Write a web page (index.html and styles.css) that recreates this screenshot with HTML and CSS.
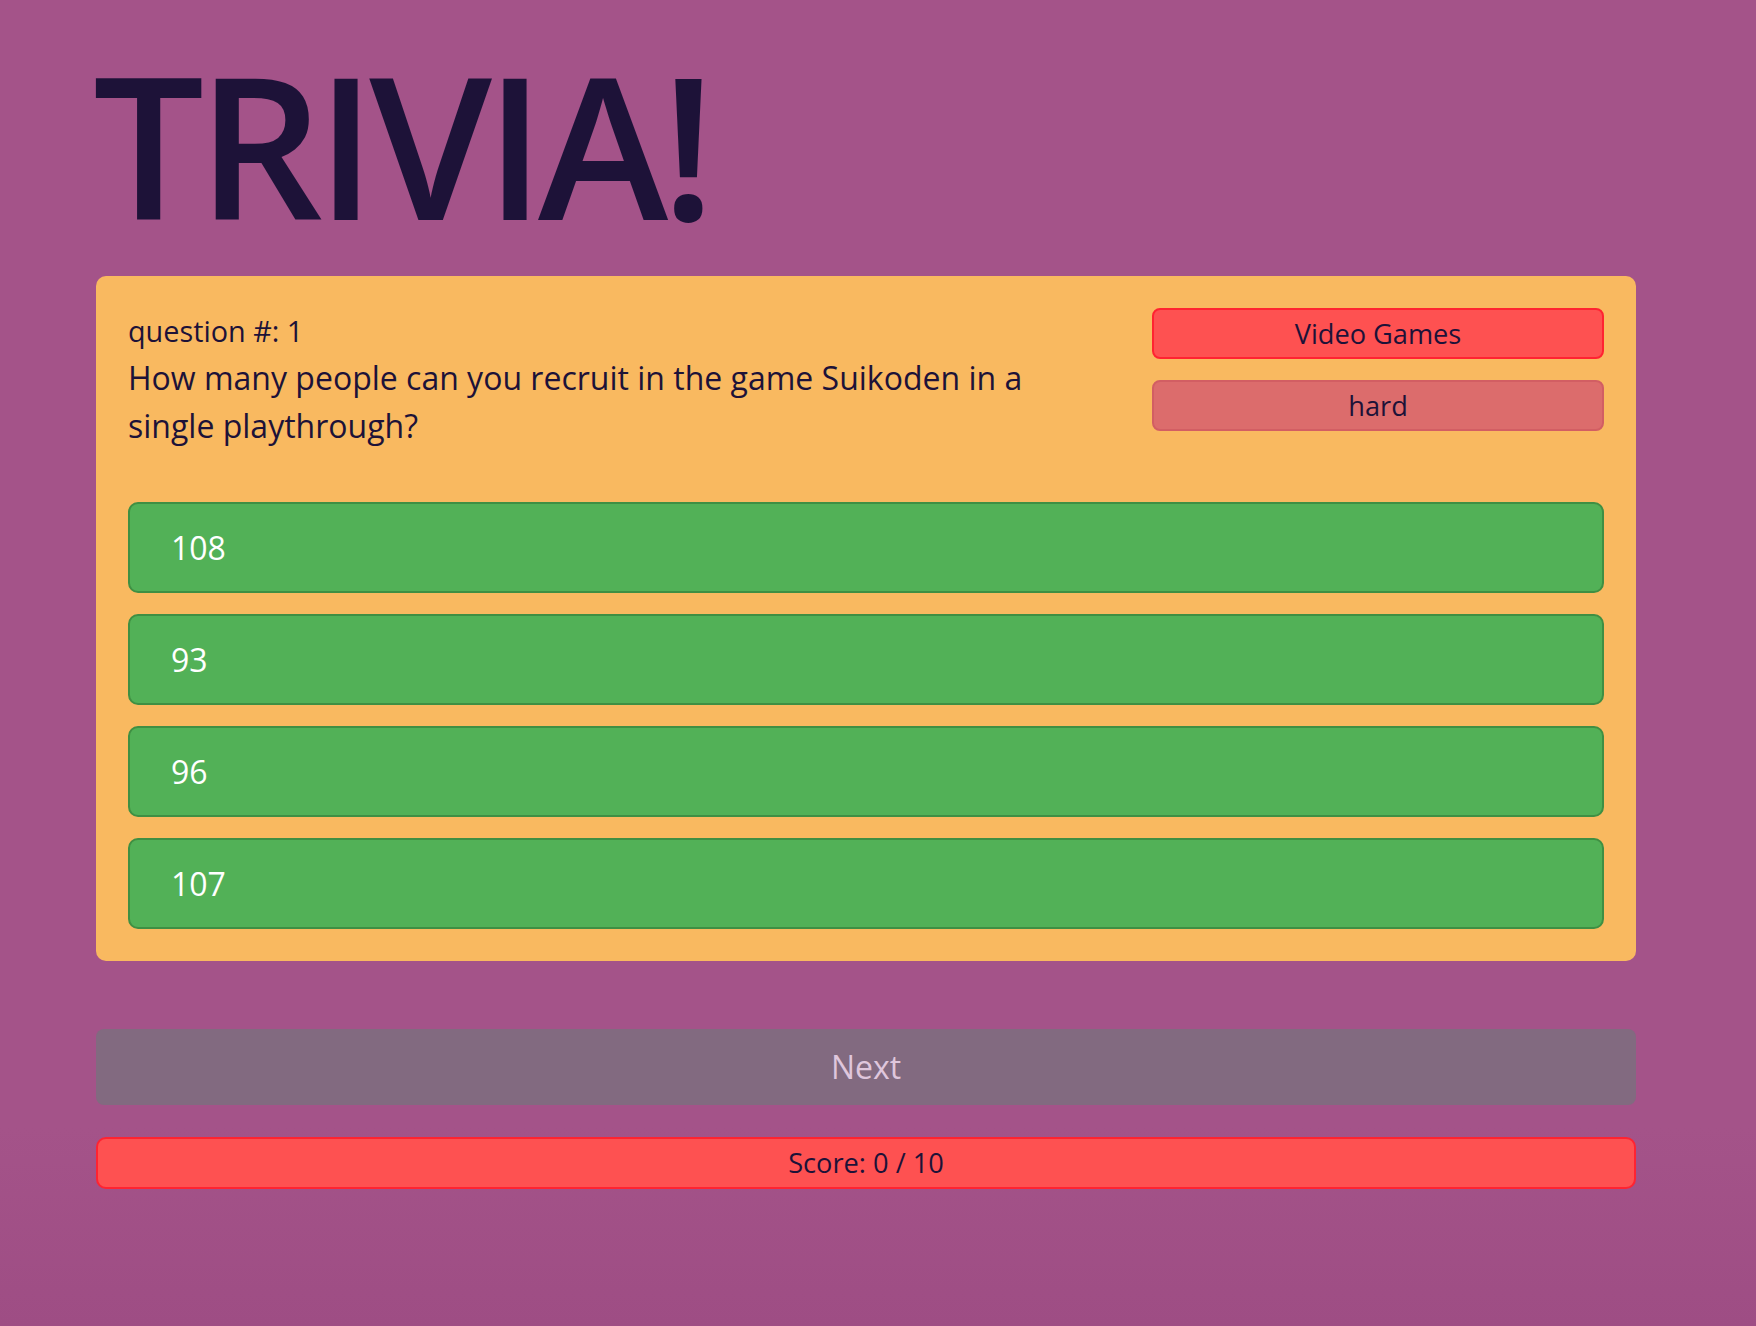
FILE: index.html
```html
<!DOCTYPE html>
<html lang="en">
<head>
<meta charset="utf-8">
<title>Trivia</title>
<link rel="stylesheet" href="styles.css">
</head>
<body>
<main class="app">
  <h1 class="title">TRIVIA!</h1>
  <section class="card">
    <div class="card-head">
      <div class="question-block">
        <div class="question-num">question #: 1</div>
        <p class="question">How many people can you recruit in the game Suikoden in a single playthrough?</p>
      </div>
      <div class="tags">
        <div class="tag tag-category">Video Games</div>
        <div class="tag tag-hard">hard</div>
      </div>
    </div>
    <div class="answers">
      <button class="answer">108</button>
      <button class="answer">93</button>
      <button class="answer">96</button>
      <button class="answer">107</button>
    </div>
  </section>
  <button class="next">Next</button>
  <div class="score">Score: 0 / 10</div>
</main>
</body>
</html>
```

FILE: styles.css
```css
* {
  box-sizing: border-box;
}

html, body {
  margin: 0;
  padding: 0;
}

body {
  min-height: 100vh;
  background: linear-gradient(to bottom, #a45389 0%, #a45389 85%, #9e4d84 100%);
  font-family: "Open Sans", "Noto Sans", sans-serif;
  color: #1d1238;
}

.app {
  padding: 44px 120px 0 96px;
  display: flex;
  flex-direction: column;
}

.title {
  margin: 0 0 0 -3px;
  font-size: 197px;
  line-height: 200px;
  font-weight: 600;
  letter-spacing: -7px;
  color: #1d1238;
}

.card {
  margin-top: 32px;
  background: #f9b960;
  border-radius: 10px;
  padding: 32px;
  display: flex;
  flex-direction: column;
  gap: 52px;
}

.card-head {
  display: flex;
  align-items: flex-start;
  gap: 64px;
}

.question-block {
  flex: 1;
}

.question-num {
  font-size: 28.8px;
  line-height: 46px;
}

.question {
  margin: 0;
  font-size: 32px;
  line-height: 48px;
}

.tags {
  width: 452px;
  display: flex;
  flex-direction: column;
  gap: 21px;
}

.tag {
  border: 2px solid #ff2331;
  border-radius: 8px;
  background: #fe5151;
  text-align: center;
  font-size: 27.2px;
  line-height: 39px;
  padding: 4px 0;
  color: #1d1238;
}

.tag-hard {
  background: #dc6c6c;
  border-color: #d25e63;
}

.answers {
  display: flex;
  flex-direction: column;
  gap: 21px;
}

.answer {
  display: block;
  width: 100%;
  text-align: left;
  background: #52b157;
  border: 2px solid #3f8f43;
  border-radius: 10px;
  padding: 22px 41px;
  font-family: "Open Sans", "Noto Sans", sans-serif;
  font-size: 32px;
  line-height: 43px;
  color: #ffffff;
}

.next {
  margin-top: 68px;
  display: block;
  width: 100%;
  border: none;
  border-radius: 8px;
  background: #826a80;
  color: #dfc6dc;
  font-family: "Open Sans", "Noto Sans", sans-serif;
  font-size: 32px;
  line-height: 44px;
  padding: 16px 0;
  text-align: center;
}

.score {
  margin-top: 32px;
  border: 2px solid #ff2331;
  border-radius: 10px;
  background: #fe5151;
  text-align: center;
  font-size: 27.2px;
  line-height: 40px;
  padding: 4px 0;
  color: #1d1238;
}
```
